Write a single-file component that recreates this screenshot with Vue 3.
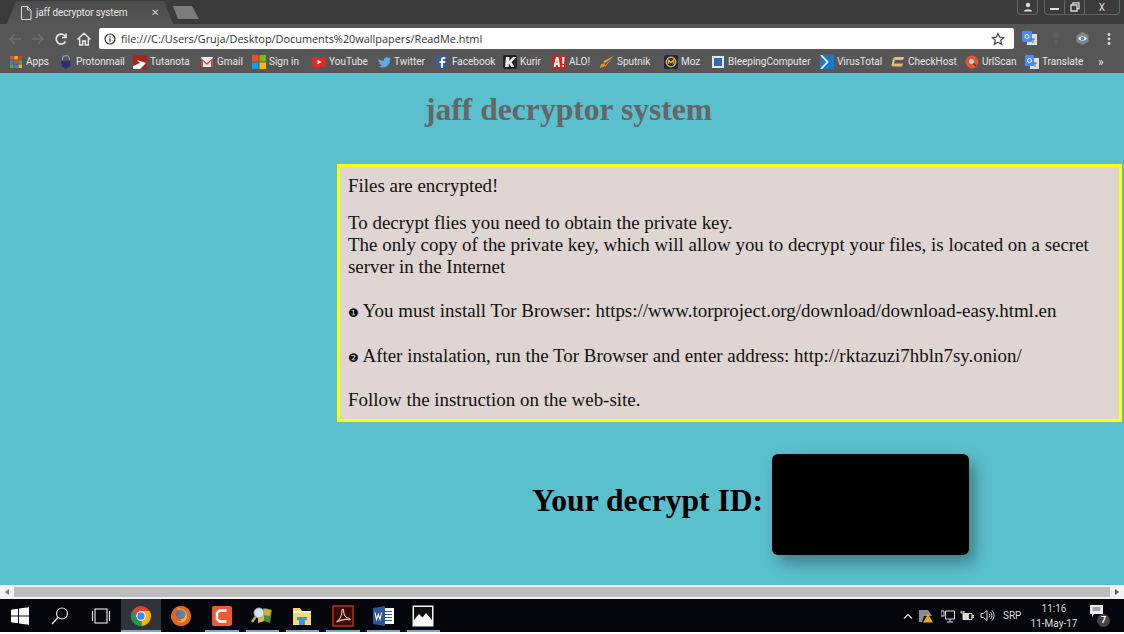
<template>
  <div class="screen">
    <header class="tabstrip">
      <div class="tab">
        <svg class="tab-doc" width="12" height="14" viewBox="0 0 12 14"><path d="M1.500.5h6l3.500 3.500v9.500h-9.500z M7.500.5v3.500h3.500" fill="none" stroke="#d8d8d8" /></svg>
        <span class="tab-title">jaff decryptor system</span>
        <span class="tab-close">✕</span>
      </div>
      <div class="new-tab"></div>
      <div class="window-btns">
        <div class="win-group user">
          <svg width="10" height="10" viewBox="0 0 10 10"><circle cx="5" cy="3" r="2.200" fill="#ddd" /><path d="M1 9.500c0-3 8-3 8 0z" fill="#ddd" /></svg>
        </div>
        <div class="win-group controls">
          <span class="ctl"><i class="min"></i></span>
          <span class="ctl"><svg width="10" height="10" viewBox="0 0 10 10"><path d="M3 2.500V.8h6v5.700H7M1 3h6v6H1z" fill="none" stroke="#ddd" stroke-width="1.300" /></svg></span>
          <span class="ctl wide">X</span>
        </div>
      </div>
    </header>

    <div class="toolbar">
      <svg class="nav" width="16" height="14" viewBox="0 0 16 14"><path d="M14 7H3M8 2L3 7l5 5" fill="none" stroke="#6e6e6e" stroke-width="1.600" /></svg>
      <svg class="nav" width="16" height="14" viewBox="0 0 16 14"><path d="M2 7h11M8 2l5 5-5 5" fill="none" stroke="#6e6e6e" stroke-width="1.600" /></svg>
      <svg class="nav" width="16" height="14" viewBox="0 0 16 14"><path d="M12.500 9.500a5 5 0 1 1 .2-4.500M13 1.500v4H9" fill="none" stroke="#e8e8e8" stroke-width="1.700" /></svg>
      <svg class="nav" width="16" height="14" viewBox="0 0 16 14"><path d="M1.500 7.500L8 1.300l6.500 6.200M3.700 6.500v6.500h3V9h2.600v4h3V6.500" fill="none" stroke="#e8e8e8" stroke-width="1.500" /></svg>
      <div class="omnibox">
        <svg width="12" height="12" viewBox="0 0 12 12"><circle cx="6" cy="6" r="5" fill="none" stroke="#333" stroke-width="1.200" /><path d="M6 5.200v3.600M6 3v1.300" stroke="#333" stroke-width="1.300" /></svg>
        <span class="url">file:///C:/Users/Gruja/Desktop/Documents%20wallpapers/ReadMe.html</span>
        <svg class="star" width="14" height="14" viewBox="0 0 14 14"><path d="M7 1.500l1.700 3.700 4 .4-3 2.700.9 4L7 10.300l-3.600 2 .9-4-3-2.700 4-.4z" fill="none" stroke="#444" stroke-width="1.200" /></svg>
      </div>
      <div class="extensions">
        <svg width="15" height="15" viewBox="0 0 15 15"><rect x="5" y="3" width="10" height="11" fill="#e0e0e0" /><rect width="10" height="11" rx="1" fill="#4a8af4" /><circle cx="5" cy="5.500" r="2" fill="none" stroke="#fff" /><path d="M9 8h4M11 8v4" stroke="#666" /></svg>
        <svg width="10" height="15" viewBox="0 0 10 15"><circle cx="5" cy="4" r="3.500" fill="#5e5e5e" /><rect x="3.500" y="6" width="3" height="8" fill="#5e5e5e" /></svg>
        <svg width="15" height="15" viewBox="0 0 15 15"><path d="M7.500 1l6 3.300v6.400l-6 3.300-6-3.300V4.300z" fill="#7f8487" /><path d="M3 7.500c2.500-3 6.500-3 9 0-2.500 3-6.500 3-9 0z" fill="#fff" /><circle cx="7.500" cy="7.500" r="1.700" fill="#2a8ac0" /></svg>
        <svg class="menu-dots" width="4" height="14" viewBox="0 0 4 14"><circle cx="2" cy="2.500" r="1.400" fill="#ddd" /><circle cx="2" cy="7" r="1.400" fill="#ddd" /><circle cx="2" cy="11.500" r="1.400" fill="#ddd" /></svg>
      </div>
    </div>

    <nav class="bookmarks">
      <a v-for="b in bookmarks" :key="b.label" class="bookmark" :style="{ width: b.w + 'px' }">
        <svg width="14" height="14" viewBox="0 0 14 14" v-html="b.icon"></svg>
        <span>{{ b.label }}</span>
      </a>
      <span class="more">»</span>
    </nav>

    <main class="page">
      <h1>jaff decryptor system</h1>
      <section class="note">
        <p>Files are encrypted!</p>
        <p>To decrypt flies you need to obtain the private key.<br />The only copy of the private key, which will allow you to decrypt your files, is located on a secret server in the Internet<br /><br /><span class="num">❶</span> You must install Tor Browser: https://www.torproject.org/download/download-easy.html.en<br /><br /><span class="num">❷</span> After instalation, run the Tor Browser and enter address: http://rktazuzi7hbln7sy.onion/<br /><br />Follow the instruction on the web-site.</p>
      </section>
      <div class="decrypt">
        <h2>Your decrypt ID:</h2>
        <div class="id-box"></div>
      </div>
    </main>

    <div class="scrollbar">
      <span class="arrow left"></span>
      <div class="thumb"></div>
      <span class="arrow right"></span>
    </div>

    <footer class="taskbar">
      <div v-for="(t, i) in taskItems" :key="i" class="task" :class="{ active: t.active, running: t.running }">
        <svg width="22" height="22" viewBox="0 0 22 22" v-html="t.icon"></svg>
      </div>
      <div class="tray">
        <svg class="t-caret" width="10" height="6" viewBox="0 0 10 6"><path d="M1 5.500l4-4 4 4" fill="none" stroke="#ddd" stroke-width="1.200" /></svg>
        <svg class="t-warn" width="14" height="14" viewBox="0 0 14 14"><path d="M0 1h9l4 6H5L3 13H0z" fill="#8d8d8d" /><path d="M9 5l5 8.500H4z" fill="#f5a60d" /></svg>
        <svg class="t-net" width="14" height="14" viewBox="0 0 14 14"><path d="M4.500 2h9v8h-9zM9 10v3M6 13h6M0 2h3v5H0z" fill="none" stroke="#ddd" /></svg>
        <svg class="t-batt" width="14" height="10" viewBox="0 0 14 10"><path d="M3 2.500h9v6H3zM12 4.500h2v2h-2zM1 0h3v2H1z" fill="none" stroke="#ddd" /><rect x="3" y="3" width="6" height="5" fill="#ddd" /></svg>
        <svg class="t-vol" width="15" height="13" viewBox="0 0 15 13"><path d="M1 4.500h2.500L7 1.500v10L3.500 8.500H1zM9 4.500a3 3 0 0 1 0 4M10.500 3a5 5 0 0 1 0 7M12 1.500a7 7 0 0 1 0 10" fill="none" stroke="#ddd" /></svg>
        <span class="lang">SRP</span>
        <div class="clock"><span>11:16</span><span>11-May-17</span></div>
        <div class="notify">
          <svg width="14" height="13" viewBox="0 0 14 13"><path d="M0 0h13v9H4l-2 3V9H0z" fill="#eee" /><path d="M2.500 3h8M2.500 5h8" stroke="#555" /></svg>
          <span class="badge">7</span>
        </div>
      </div>
    </footer>
  </div>
</template>

<script setup>
const bookmarks = [
  { label: 'Apps', w: 50, icon: '<rect x="1" y="1" width="3.500" height="3.500" fill="#e0562d"/><rect x="5.300" y="1" width="3.500" height="3.500" fill="#e8b32c"/><rect x="9.500" y="1" width="3.500" height="3.500" fill="#d8452f"/><rect x="1" y="5.300" width="3.500" height="3.500" fill="#3b82d8"/><rect x="5.300" y="5.300" width="3.500" height="3.500" fill="#e0562d"/><rect x="9.500" y="5.300" width="3.500" height="3.500" fill="#4aa84a"/><rect x="1" y="9.500" width="3.500" height="3.500" fill="#4aa84a"/><rect x="5.300" y="9.500" width="3.500" height="3.500" fill="#3b82d8"/><rect x="9.500" y="9.500" width="3.500" height="3.500" fill="#e8b32c"/>' },
  { label: 'Protonmail', w: 74, icon: '<path d="M3.500 5V4a3.500 3.500 0 0 1 7 0v1" fill="none" stroke="#8f94c4" stroke-width="1.300"/><path d="M2.500 6h9v5l-4.500 3-4.500-3z" fill="#2b2f6e"/>' },
  { label: 'Tutanota', w: 67, icon: '<rect width="14" height="14" fill="#a5281f"/><path d="M0 11l7-3-3-3 9 3-6 6H0z" fill="#fff"/>' },
  { label: 'Gmail', w: 52, icon: '<rect x="1" y="2" width="12" height="10" rx="1" fill="#eee"/><path d="M1 3l6 5 6-5v9h-2V6L7 10 3 6v6H1z" fill="#d44638"/>' },
  { label: 'Sign in', w: 60, icon: '<rect width="6.500" height="6.500" fill="#f25022"/><rect x="7.500" width="6.500" height="6.500" fill="#7fba00"/><rect y="7.500" width="6.500" height="6.500" fill="#00a4ef"/><rect x="7.500" y="7.500" width="6.500" height="6.500" fill="#ffb900"/>' },
  { label: 'YouTube', w: 65, icon: '<rect y="2" width="14" height="10" rx="2.500" fill="#e02a20"/><path d="M5.500 4.700L9.800 7l-4.300 2.300z" fill="#fff"/>' },
  { label: 'Twitter', w: 58, icon: '<path d="M0 2.500c2 2.200 4 3.200 6.700 3.300C6.400 3 9.600 1 11.500 3L13.800 2l-1 2 1.200-.3-1.300 1.500C13.800 9.500 8 15 1 11.500c1.500.1 3-.3 4-1.200C3.500 10 2.500 9 2 7.800h1.500C2 7.300 1 6 1 4.700l1.500.3C1 4 .4 3.500 0 2.500z" fill="#55acee"/>' },
  { label: 'Facebook', w: 68, icon: '<rect x="1" y="1" width="12" height="12" fill="#3b5998"/><path d="M8 13V8h2l.3-2H8V5c0-.7.3-1 1-1h1.300V2H8.500C7 2 6 3 6 4.500V6H4.500v2H6v5z" fill="#fff"/>' },
  { label: 'Kurir', w: 49, icon: '<rect width="14" height="14" rx="2" fill="#222"/><path d="M3 2h3.500L6 6l4-4h3.500L8.500 7l3 5H8L6 8.500 5.500 12H2z" fill="#eee"/>' },
  { label: 'ALO!', w: 48, icon: '<rect width="14" height="14" fill="#c9281e"/><path d="M1.500 12L4 2h2.500L8 12H6l-.3-2H4l-.4 2zM4.300 8h1.200L5 4.500zM10 2h2.500L12 9h-1.500zM10.300 10H12v2h-1.700z" fill="#fff"/>' },
  { label: 'Sputnik', w: 64, icon: '<path d="M14 1L5 12 4.500 8 1 9.500 0 13l4-1.500z" fill="#f09a22"/><path d="M14 1L3 6.500 5 8z" fill="#f5b342"/>' },
  { label: 'Moz', w: 47, icon: '<rect width="14" height="14" rx="1.500" fill="#1b2a4a"/><circle cx="7" cy="7" r="4.700" fill="none" stroke="#f0a92a" stroke-width="1.500"/><path d="M4.500 9V5L7 7.500 9.500 5v4" fill="none" stroke="#f0a92a" stroke-width="1.300"/>' },
  { label: 'BleepingComputer', w: 109, icon: '<rect x="1" y="1" width="12" height="12" fill="#dfe6ee"/><rect x="3" y="3" width="8" height="8" fill="#2e6cb0"/>' },
  { label: 'VirusTotal', w: 71, icon: '<rect width="14" height="14" fill="#1b78c7"/><path d="M1 0l6.500 7L1 14" fill="none" stroke="#fff" stroke-width="1.800"/>' },
  { label: 'CheckHost', w: 74, icon: '<path d="M4 2h9l-1 3H4L3 8.500h9l-1 3H2l-1.500-1L2 3.500z" fill="#dcc06e"/>' },
  { label: 'UrlScan', w: 60, icon: '<circle cx="7" cy="7" r="6.500" fill="#e2572d"/><circle cx="6.500" cy="6.500" r="2.500" fill="#bcd"/><path d="M8.500 8.500l2.500 2.500" stroke="#333" stroke-width="1.300"/>' },
  { label: 'Translate', w: 73, icon: '<rect x="5" y="3" width="9" height="11" fill="#e0e0e0"/><rect width="9" height="11" rx="1" fill="#4a8af4"/><circle cx="4.500" cy="5.500" r="2" fill="none" stroke="#fff"/><path d="M8 8h4M10 8v4" stroke="#666"/>' }
]

const taskItems = [
  { icon: '<path d="M2 4.800l7-1v6.700H2zM10 3.600l10-1.400v8.300H10zM2 11.500h7v6.700l-7-1zM10 11.500h10v8.300l-10-1.400z" fill="#fff"/>' },
  { icon: '<circle cx="13" cy="8.500" r="5.500" fill="none" stroke="#ddd" stroke-width="1.200"/><path d="M9 12.500l-6 6.500" stroke="#ddd" stroke-width="1.500"/>' },
  { icon: '<rect x="5" y="4" width="12" height="14" fill="none" stroke="#ddd" stroke-width="1.200"/><path d="M2.500 6v10M19.500 6v10" stroke="#ddd" stroke-width="1.200"/>' },
  { active: true, running: true, icon: '<circle cx="11" cy="11" r="10" fill="#db4437"/><path d="M11 11L2.300 16a10 10 0 0 0 9.500 5z" fill="#0f9d58"/><path d="M11 6h8.500a10 10 0 0 1-7.700 15z" fill="#f4b400"/><path d="M11 6L19.500 6A10 10 0 0 1 21 11H11z" fill="#f4b400"/><path d="M2.300 16A10 10 0 0 1 2.500 5.500L7 12z" fill="#0f9d58" opacity=".9"/><circle cx="11" cy="11" r="4.800" fill="#fff"/><circle cx="11" cy="11" r="3.700" fill="#4285f4"/>' },
  { icon: '<circle cx="11" cy="11" r="10" fill="#1d5fa8"/><path d="M1.500 9C3 3 8 .5 12 1c5 .5 9 5 9 10 0 6-5 10.500-10 10C5 21 1 16 1 11c0-1 .2-1.500.5-2z" fill="#e7661c"/><path d="M7 4c4-1.500 10 1 10 7 0 4-3 6.500-6 6.500-3 0-5-2-5.500-4 2 1.500 5 1.500 6.500-.5-1-1-3-1-4-.5C7 11 9 9 11 9 10 7 8.500 6 7 4z" fill="#f9b233"/><circle cx="10.500" cy="9.500" r="5" fill="#2c73c4" opacity=".75"/><path d="M3 5c2 5 5 9 9 11-4 1-7-1-9-4z" fill="#e7661c"/>' },
  { running: true, icon: '<rect x="1" y="1" width="20" height="20" rx="2" fill="#ee5a35"/><path d="M15.500 5.500h-7L6 8v6l2.500 2.500h7" fill="none" stroke="#fff" stroke-width="2.500"/>' },
  { running: true, icon: '<path d="M7 5l7-2 7 2-2 13-6-2-6 2z" fill="#4d8a3a"/><path d="M13 4l7 1-1 6-6-1z" fill="#e7a92c"/><path d="M7 11l6-1v6l-6 2z" fill="#e8b83a"/><circle cx="8" cy="8" r="5" fill="#cfe6f5" stroke="#8ab" /><path d="M4.500 12L1 17" stroke="#c9a86a" stroke-width="2.500"/>' },
  { running: true, icon: '<path d="M2 3h7l2 3h9v14H2z" fill="#f7d774"/><rect x="2" y="6" width="18" height="2" fill="#fff4c2"/><rect x="8" y="13" width="6" height="7" fill="#3b97d3"/><rect x="6" y="12" width="10" height="3" fill="#3b97d3"/>' },
  { running: true, icon: '<rect x="1" y="1" width="20" height="20" fill="#3a0a06" stroke="#d6321d" stroke-width="1.300"/><path d="M4.500 17c3-2 5.500-7 5.500-12 0-1 1.500-1 1.500 0 0 5 2.500 8 6 8.500 1 .2.800 1.500-.5 1.200C13 14 8 15 4.500 17z" fill="none" stroke="#e9c5bd" stroke-width="1.100"/>' },
  { running: true, icon: '<rect x="9" y="3" width="13" height="16" fill="#fff"/><path d="M11 6.500h9M11 9.500h9M11 12.500h9M11 15.500h9" stroke="#2b579a" stroke-width="1.200"/><path d="M1 3l12-2v20L1 19z" fill="#2b579a"/><path d="M3 7.500l1.500 7 1.800-5 1.700 5 1.500-7" fill="none" stroke="#fff" stroke-width="1.100"/>' },
  { running: true, icon: '<rect x="1" y="1" width="20" height="20" fill="#fff" stroke="#eee"/><rect x="2" y="2" width="18" height="18" fill="#111"/><path d="M2 20v-5l5-6 3.500 3.500L14 8l6 7v5z" fill="#fff"/>' }
]
</script>

<style>
html, body { margin: 0; background: #fff; overflow: hidden; }
</style>

<style scoped>
.screen {
  width: 1124px;
  height: 634px;
  display: flex;
  flex-direction: column;
  font-family: Roboto, "Open Sans", sans-serif;
  overflow: hidden;
}

/* chrome */
.tabstrip {
  height: 24px;
  background: #3b3b3b;
  display: flex;
  align-items: flex-end;
  padding-left: 7px;
  position: relative;
}
.tab {
  width: 166px;
  height: 23px;
  background: linear-gradient(#4c4c4c, #565656);
  clip-path: polygon(0 100%, 9px 0, 157px 0, 100% 100%);
  display: flex;
  align-items: center;
  gap: 4px;
  padding-left: 13px;
  box-sizing: border-box;
  color: #e6e6e6;
  font-size: 10px;
  letter-spacing: -.15px;
}
.tab-doc { flex: none; }
.tab-title { flex: 1; white-space: nowrap; }
.tab-close { font-size: 10px; color: #ccc; margin-right: 14px; }
.new-tab {
  width: 26px;
  height: 13px;
  margin-bottom: 5px;
  background: #7b7b7b;
  clip-path: polygon(0 0, 19px 0, 100% 100%, 5px 100%);
}
.window-btns {
  position: absolute;
  top: 0;
  right: 4px;
  display: flex;
  gap: 6px;
}
.win-group {
  height: 14px;
  border: 1px solid #666;
  border-top: 0;
  border-radius: 0 0 4px 4px;
  display: flex;
  align-items: center;
  justify-content: center;
}
.user { width: 19px; }
.controls { width: 74px; }
.ctl {
  width: 20px;
  height: 14px;
  display: flex;
  align-items: center;
  justify-content: center;
  border-right: 1px solid #666;
  color: #ddd;
  font-size: 10px;
  box-sizing: border-box;
}
.ctl.wide { flex: 1; border-right: 0; }
.min { display: block; width: 9px; height: 2px; background: #ddd; margin-top: 4px; }

.toolbar {
  height: 25px;
  padding: 4px 0 0 7px;
  box-sizing: border-box;
  background: #565656;
  display: flex;
  align-items: center;
  gap: 7px;
}
.nav { flex: none; }
.omnibox {
  width: 915px;
  height: 21px;
  background: #fff;
  border-radius: 2px;
  display: flex;
  align-items: center;
  padding: 0 9px 0 5px;
  box-sizing: border-box;
  gap: 5px;
  font-family: "Open Sans", sans-serif;
}
.url { flex: 1; font-size: 10.9px; color: #333; white-space: nowrap; }
.extensions {
  flex: 1;
  display: flex;
  align-items: center;
  gap: 14px;
  padding-left: 1px;
}
.menu-dots { margin-left: 3px; }

.bookmarks {
  height: 24px;
  padding: 1px 0 0 9px;
  box-sizing: border-box;
  background: #565656;
  display: flex;
  align-items: center;
  color: #e6e6e6;
  font-size: 10px;
}
.bookmark {
  flex: none;
  display: flex;
  align-items: center;
  gap: 3px;
  white-space: nowrap;
}
.more { font-size: 12px; }

/* page */
.page {
  flex: 1;
  background: #5bc0ce;
  font-family: "Liberation Serif", "Times New Roman", serif;
  min-height: 0;
  overflow: hidden;
}
h1 {
  margin: 18px 0 36px;
  height: 37px;
  line-height: 37px;
  padding-left: 425px;
  font-size: 31.600px;
  font-weight: 700;
  color: #666;
  white-space: nowrap;
}
.note {
  margin-left: 337px;
  width: 785px;
  box-sizing: border-box;
  height: 258px;
  border: 3px solid #ffff14;
  background: #dfd5d2;
  padding: 8px;
  font-size: 18.950px;
  line-height: 22.100px;
  color: #111;
}
.note p { margin: 0 0 15px; }
.note p:last-child { margin: 0; }
.num { font-family: "DejaVu Sans", sans-serif; font-size: 12px; line-height: 0; }
.decrypt {
  margin: 32px 0 0 532px;
  display: flex;
  align-items: center;
  gap: 9px;
}
h2 {
  margin: 0 0 8px;
  font-size: 31.600px;
  font-weight: 700;
  color: #000;
  white-space: nowrap;
}
.id-box {
  width: 197px;
  height: 101px;
  background: #000;
  border-radius: 6px;
  box-shadow: 6px 8px 16px rgba(0, 0, 0, .35);
}

.scrollbar {
  height: 14px;
  background: #f1f1f1;
  display: flex;
  align-items: center;
  flex: none;
}
.arrow { width: 14px; display: flex; justify-content: center; }
.arrow.left::before { content: ""; border: 3.500px solid transparent; border-right: 4px solid #7a7a7a; border-left: 0; }
.arrow.right::before { content: ""; border: 3.500px solid transparent; border-left: 4px solid #555; border-right: 0; }
.thumb { flex: 1; height: 10px; background: #bdbdbd; }

.taskbar {
  height: 33px;
  margin-bottom: 2px;
  flex: none;
  background: #05070d;
  display: flex;
}
.task {
  width: 40.300px;
  height: 33px;
  display: flex;
  align-items: center;
  justify-content: center;
  position: relative;
  box-sizing: border-box;
}
.task.active { background: #30343a; }
.task.running::after {
  content: "";
  position: absolute;
  left: 4px;
  right: 3px;
  bottom: 0;
  height: 2px;
  background: #76aad6;
}
.task.active::after { left: 0; right: 0; }
.tray {
  margin-left: auto;
  display: flex;
  align-items: center;
  color: #ddd;
  font-size: 10px;
  padding-right: 14px;
}
.t-warn { margin-left: 6px; }
.t-net { margin-left: 8px; }
.t-batt { margin-left: 5px; }
.t-vol { margin-left: 6px; }
.lang { margin-left: 8px; width: 17px; white-space: nowrap; }
.clock {
  display: flex;
  flex-direction: column;
  align-items: center;
  line-height: 15px;
  width: 50px;
  margin-left: 9px;
  white-space: nowrap;
}
.notify { position: relative; width: 20px; height: 22px; margin-left: 11px; }
.badge {
  position: absolute;
  right: 0;
  bottom: 0;
  width: 13px;
  height: 13px;
  border-radius: 50%;
  background: #444;
  color: #fff;
  font-size: 9px;
  font-weight: 700;
  line-height: 13px;
  text-align: center;
}
</style>
